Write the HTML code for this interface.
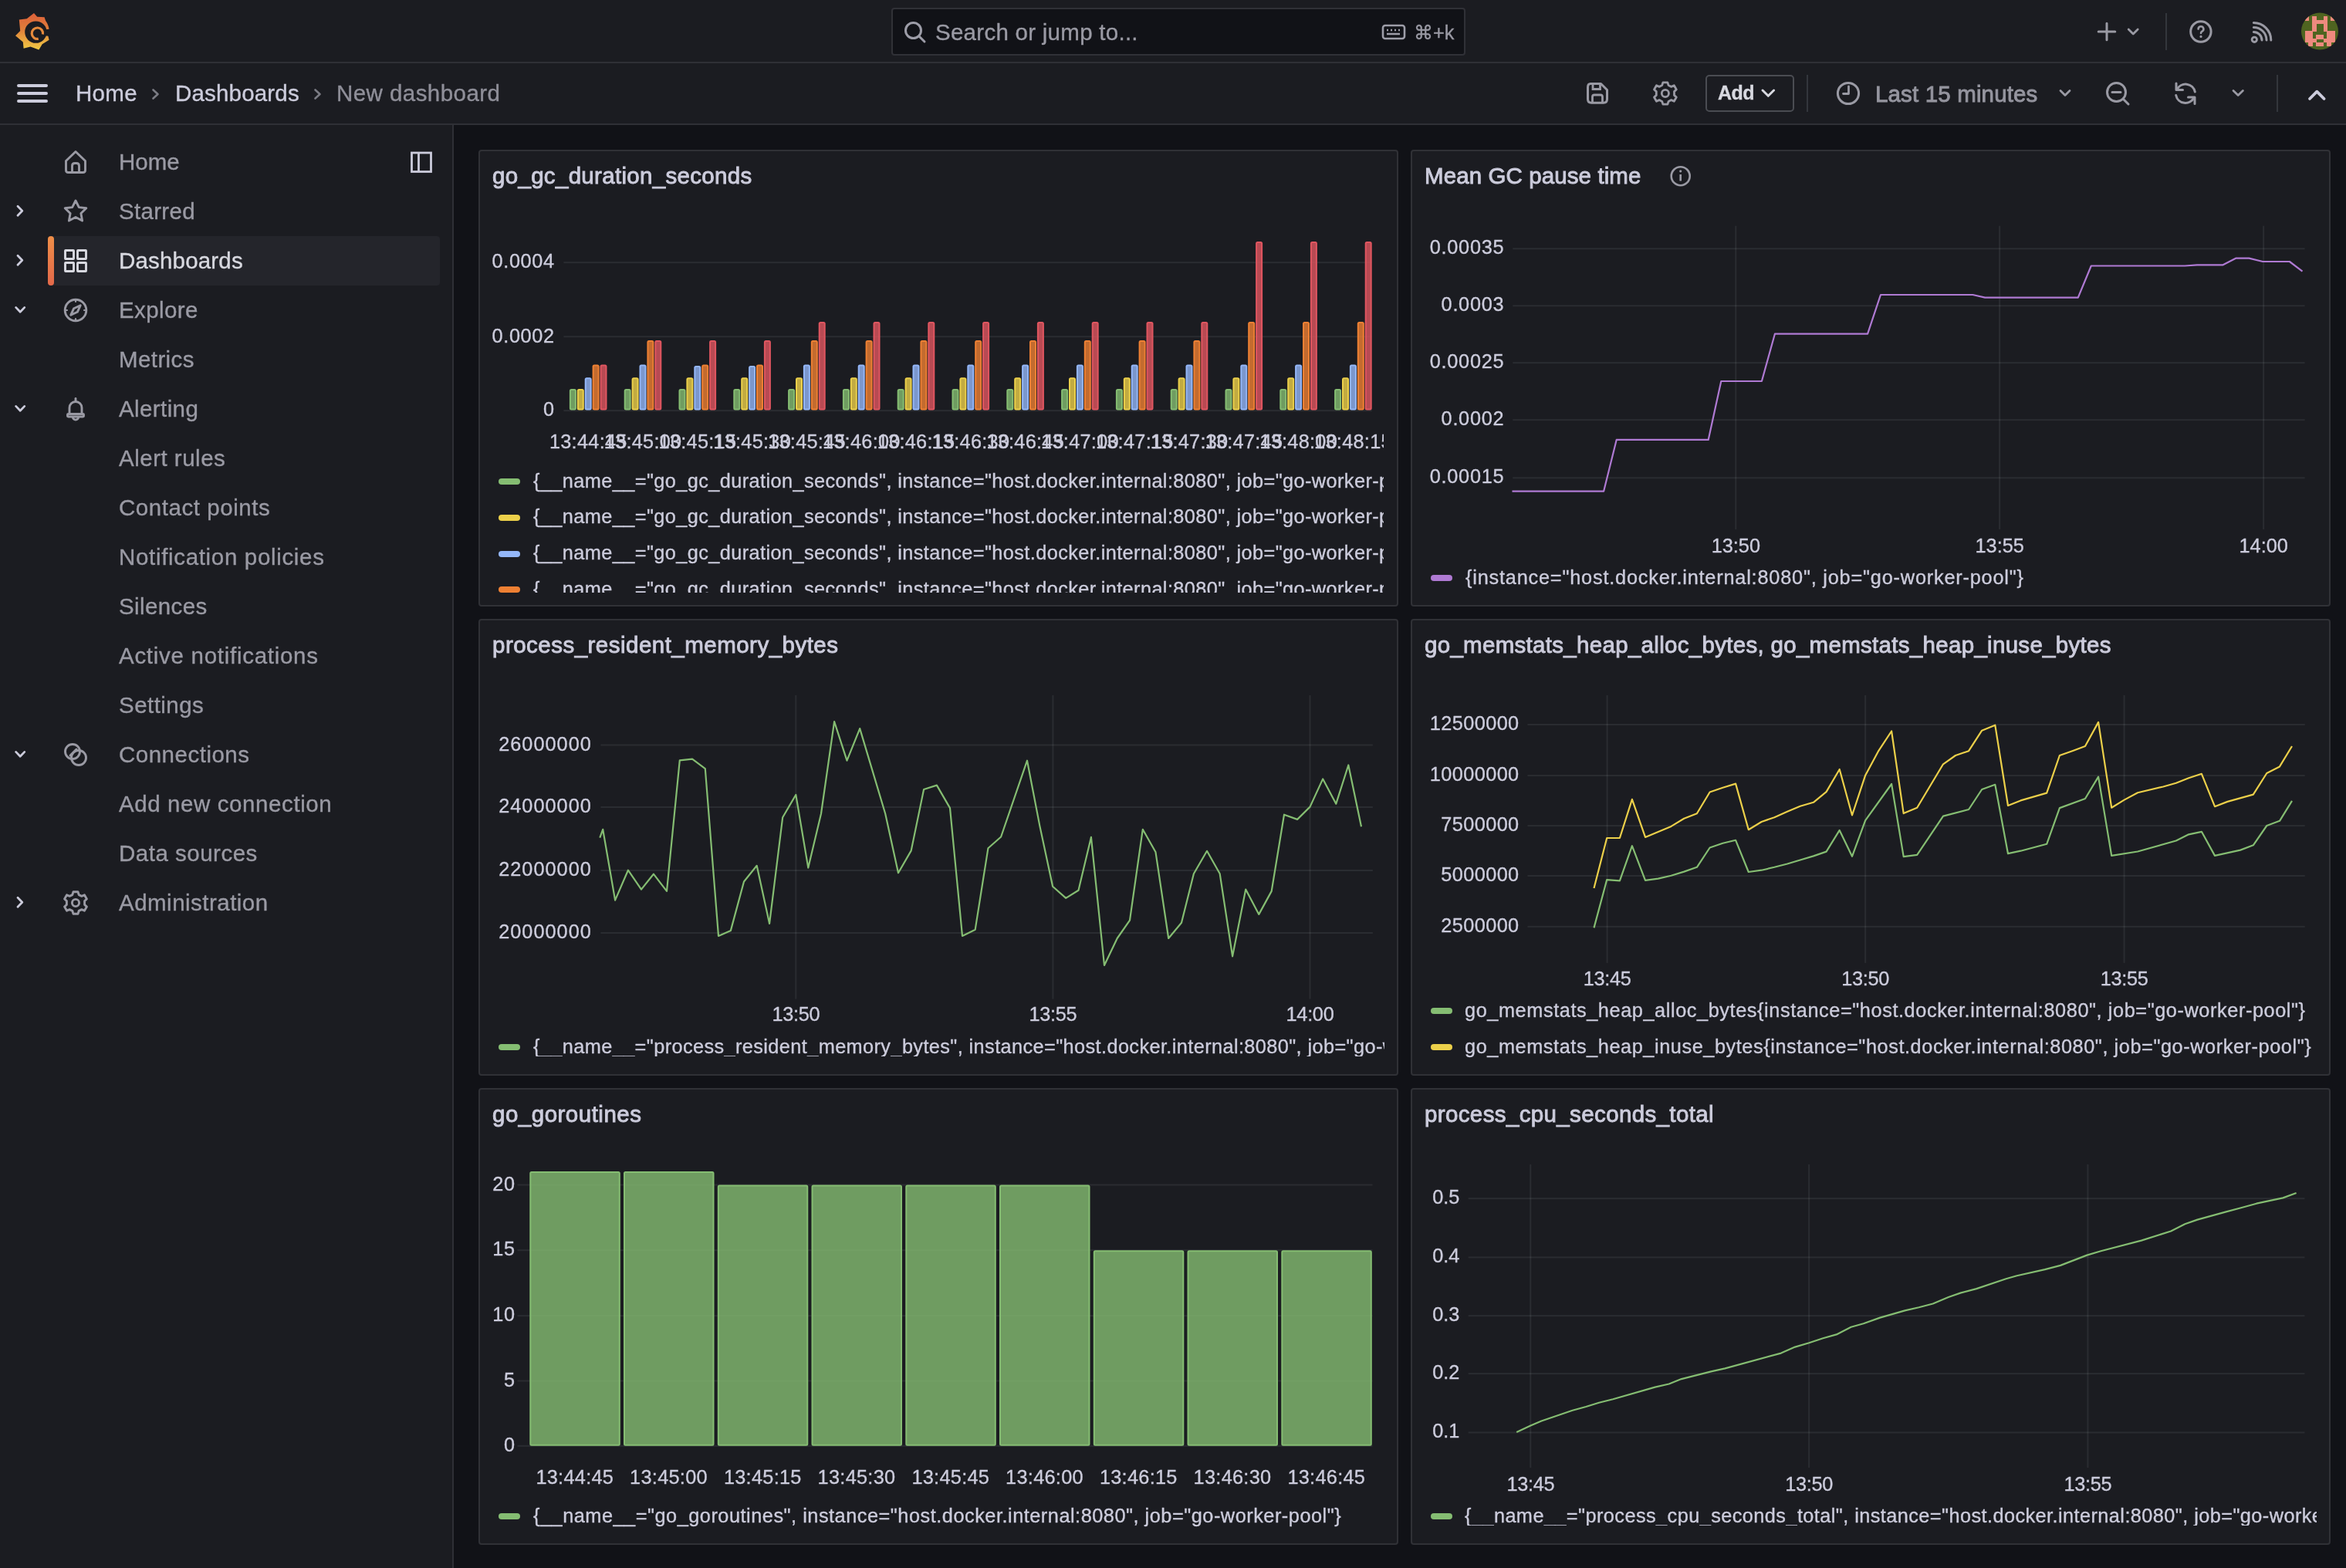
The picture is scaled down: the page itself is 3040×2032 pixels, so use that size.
<!DOCTYPE html>
<html><head><meta charset="utf-8"><title>New dashboard - Dashboards - Grafana</title>
<style>
html,body{margin:0;padding:0;width:3040px;height:2032px;overflow:hidden;background:#111217;font-family:"Liberation Sans", sans-serif;}
.r{position:absolute;}
.t{position:absolute;white-space:pre;will-change:transform;-webkit-text-stroke:0.35px currentColor;}
svg{will-change:transform;}
@media (max-width:1600px){html{zoom:0.5;}}
</style></head><body>
<div class="r" style="left:0px;top:0px;width:3040px;height:80px;background:#1b1c21"></div>
<div class="r" style="left:0px;top:80px;width:3040px;height:2px;background:#2f3036"></div>
<div class="r" style="left:0px;top:82px;width:3040px;height:78px;background:#1b1c21"></div>
<div class="r" style="left:0px;top:160px;width:3040px;height:2px;background:#2f3036"></div>
<div class="r" style="left:0px;top:162px;width:586px;height:1870px;background:#1b1c21"></div>
<div class="r" style="left:586px;top:162px;width:2px;height:1870px;background:#2f3036"></div>
<svg class="r" style="left:14px;top:12px" width="56" height="58" viewBox="14 12 56 58">
<defs><linearGradient id="lg" x1="0" y1="0" x2="0" y2="1"><stop offset="0" stop-color="#dc5f3a"/><stop offset="0.45" stop-color="#e07f3a"/><stop offset="1" stop-color="#f0cb45"/></linearGradient></defs>
<path fill="url(#lg)" d="M44 17 L48.2 21.8 L57.6 22.2 Q58.6 25.5 59.2 27 Q63.2 32.5 63.9 39.7 L62 45 L63.6 51.8 L54.7 57.2 L50.4 64.6 L39.5 60.4 L30.6 62.8 L29.8 54.5 L20 46.2 L26.2 40 L24.8 25.6 L34.7 24.2 Z"/>
<circle cx="46.4" cy="41.6" r="11" fill="none" stroke="#1b1c21" stroke-width="6.4"/>
<circle cx="46.4" cy="41.6" r="8.2" fill="#1b1c21"/>
<path d="M56 38.5 L66 37.5 L66 47 L55 46 Z" fill="#1b1c21"/>
<path d="M49.77 50.27 A7.2 7.2 0 1 1 55.47 44.57" fill="none" stroke="#e58a3c" stroke-width="3.2"/>
</svg>
<div class="r" style="left:1155px;top:10px;width:744px;height:62px;background:#111217;border:2px solid #303137;border-radius:4px;box-sizing:border-box"></div>
<svg class="r" style="left:1170px;top:27px" width="32" height="30" viewBox="0 0 32 30">
<circle cx="13.5" cy="12.5" r="10" fill="none" stroke="#9d9da8" stroke-width="3"/>
<path d="M21 20 L28 27" stroke="#9d9da8" stroke-width="3" stroke-linecap="round"/></svg>
<div class="t" style="left:1212.4px;top:26.7px;font-size:29.5px;line-height:29.5px;color:#9a9aa4;letter-spacing:0.27px;">Search or jump to...</div>
<svg class="r" style="left:1790px;top:31px" width="32" height="22" viewBox="0 0 32 22">
<rect x="2" y="2" width="28" height="17" rx="3" fill="none" stroke="#9d9da8" stroke-width="2.6"/>
<path d="M7 8h2M12 8h2M17 8h2M22 8h2M7 13h17" stroke="#9d9da8" stroke-width="2.4"/></svg>
<div class="t" style="left:1831.5px;top:30.0px;font-size:25.3px;line-height:25.3px;color:#9a9aa4;">⌘+k</div>
<svg class="r" style="left:2710px;top:14px" width="330" height="56" viewBox="2710 14 330 56">
<path d="M2730 30.2 V51.8 M2719.2 41 H2740.8" stroke="#9a9aa4" stroke-width="3" stroke-linecap="round"/>
<path d="M2758.2 38 L2764.2 44 L2770.2 38" fill="none" stroke="#9a9aa4" stroke-width="2.8" stroke-linecap="round" stroke-linejoin="round"/>
<rect x="2806" y="17" width="2" height="48" fill="#33363c"/>
<circle cx="2851.9" cy="41" r="13.2" fill="none" stroke="#9a9aa4" stroke-width="3"/>
<path d="M2848.6 37.6 a3.4 3.4 0 1 1 4.8 3.1 q-1.4 0.7 -1.4 2.3" fill="none" stroke="#9a9aa4" stroke-width="2.6" stroke-linecap="round"/>
<circle cx="2852" cy="47.4" r="1.6" fill="#9a9aa4"/>
<circle cx="2921.3" cy="51.3" r="3.2" fill="none" stroke="#9a9aa4" stroke-width="2.8"/>
<path d="M2920.3 41.5 A10.6 10.6 0 0 1 2931 52 M2920.3 35.5 A16.6 16.6 0 0 1 2937 52 M2920.3 29.6 A22.4 22.4 0 0 1 2942.8 52" fill="none" stroke="#9a9aa4" stroke-width="3" stroke-linecap="round"/>
</svg>
<svg class="r" style="left:2980px;top:14px" width="54" height="54" viewBox="2980 14 54 54">
<defs><clipPath id="av"><circle cx="3006" cy="40.6" r="24"/></clipPath></defs>
<g clip-path="url(#av)" shape-rendering="crispEdges"><rect x="2980" y="14" width="54" height="54" fill="#4F6420"/><rect x="2986.50" y="21.10" width="5.40" height="5.40" fill="#EE8A7E"/><rect x="2996.10" y="21.10" width="5.40" height="5.40" fill="#EE8A7E"/><rect x="3010.50" y="21.10" width="5.40" height="5.40" fill="#EE8A7E"/><rect x="3020.10" y="21.10" width="5.40" height="5.40" fill="#EE8A7E"/><rect x="2996.10" y="25.90" width="5.40" height="5.40" fill="#EE8A7E"/><rect x="3000.90" y="25.90" width="5.40" height="5.40" fill="#EE8A7E"/><rect x="3005.70" y="25.90" width="5.40" height="5.40" fill="#EE8A7E"/><rect x="3010.50" y="25.90" width="5.40" height="5.40" fill="#EE8A7E"/><rect x="2996.10" y="30.70" width="5.40" height="5.40" fill="#EE8A7E"/><rect x="3010.50" y="30.70" width="5.40" height="5.40" fill="#EE8A7E"/><rect x="2996.10" y="35.50" width="5.40" height="5.40" fill="#EE8A7E"/><rect x="3010.50" y="35.50" width="5.40" height="5.40" fill="#EE8A7E"/><rect x="2986.50" y="40.30" width="5.40" height="5.40" fill="#EE8A7E"/><rect x="2991.30" y="40.30" width="5.40" height="5.40" fill="#EE8A7E"/><rect x="3015.30" y="40.30" width="5.40" height="5.40" fill="#EE8A7E"/><rect x="3020.10" y="40.30" width="5.40" height="5.40" fill="#EE8A7E"/><rect x="2986.50" y="45.10" width="5.40" height="5.40" fill="#EE8A7E"/><rect x="2991.30" y="45.10" width="5.40" height="5.40" fill="#EE8A7E"/><rect x="3000.90" y="45.10" width="5.40" height="5.40" fill="#EE8A7E"/><rect x="3005.70" y="45.10" width="5.40" height="5.40" fill="#EE8A7E"/><rect x="3015.30" y="45.10" width="5.40" height="5.40" fill="#EE8A7E"/><rect x="3020.10" y="45.10" width="5.40" height="5.40" fill="#EE8A7E"/><rect x="2986.50" y="49.90" width="5.40" height="5.40" fill="#EE8A7E"/><rect x="2991.30" y="49.90" width="5.40" height="5.40" fill="#EE8A7E"/><rect x="2996.10" y="49.90" width="5.40" height="5.40" fill="#EE8A7E"/><rect x="3010.50" y="49.90" width="5.40" height="5.40" fill="#EE8A7E"/><rect x="3015.30" y="49.90" width="5.40" height="5.40" fill="#EE8A7E"/><rect x="3020.10" y="49.90" width="5.40" height="5.40" fill="#EE8A7E"/><rect x="2991.30" y="54.70" width="5.40" height="5.40" fill="#EE8A7E"/><rect x="3000.90" y="54.70" width="5.40" height="5.40" fill="#EE8A7E"/><rect x="3005.70" y="54.70" width="5.40" height="5.40" fill="#EE8A7E"/><rect x="3015.30" y="54.70" width="5.40" height="5.40" fill="#EE8A7E"/></g></svg>
<svg class="r" style="left:20px;top:106px" width="46" height="30" viewBox="20 106 46 30">
<path d="M24 111 H60 M24 121 H60 M24 131 H60" stroke="#ccccdc" stroke-width="4" stroke-linecap="round"/></svg>
<div class="t" style="left:98.0px;top:105.6px;font-size:29.5px;line-height:29.5px;color:#ccccdc;letter-spacing:0.30px;">Home</div>
<svg class="r" style="left:190px;top:108px" width="240" height="28" viewBox="190 108 240 28">
<path d="M198.5 116.5 L204.5 122 L198.5 127.5" fill="none" stroke="#7b7c84" stroke-width="2.6" stroke-linecap="round" stroke-linejoin="round"/>
<path d="M408.5 116.5 L414.5 122 L408.5 127.5" fill="none" stroke="#7b7c84" stroke-width="2.6" stroke-linecap="round" stroke-linejoin="round"/></svg>
<div class="t" style="left:227.0px;top:105.6px;font-size:29.5px;line-height:29.5px;color:#ccccdc;letter-spacing:0.18px;">Dashboards</div>
<div class="t" style="left:435.6px;top:105.6px;font-size:29.5px;line-height:29.5px;color:#8f8f99;letter-spacing:0.44px;">New dashboard</div>
<svg class="r" style="left:2040px;top:90px" width="1000" height="60" viewBox="2040 90 1000 60">
<path d="M2061 108.5 H2074.5 L2082.5 116.5 V128.5 Q2082.5 133.2 2077.8 133.2 H2062.2 Q2057.5 133.2 2057.5 128.5 V113.2 Q2057.5 108.5 2061 108.5 Z" fill="none" stroke="#9a9aa4" stroke-width="3" stroke-linejoin="round"/>
<path d="M2064 109 V115.5 H2073.5 V109" fill="none" stroke="#9a9aa4" stroke-width="2.8"/>
<path d="M2063.5 133 V125.5 Q2063.5 123 2066 123 H2074 Q2076.5 123 2076.5 125.5 V133" fill="none" stroke="#9a9aa4" stroke-width="2.8"/>
<g transform="translate(2157.9 121)">
<path d="M-3 -14.2 H3 L4.2 -10.4 L7.8 -8.6 L11.4 -10.2 L14.4 -5 L11.6 -2.4 V2.4 L14.4 5 L11.4 10.2 L7.8 8.6 L4.2 10.4 L3 14.2 H-3 L-4.2 10.4 L-7.8 8.6 L-11.4 10.2 L-14.4 5 L-11.6 2.4 V-2.4 L-14.4 -5 L-11.4 -10.2 L-7.8 -8.6 L-4.2 -10.4 Z" fill="none" stroke="#9a9aa4" stroke-width="2.8" stroke-linejoin="round"/>
<circle cx="0" cy="0" r="4.6" fill="none" stroke="#9a9aa4" stroke-width="2.8"/></g>
<rect x="2211" y="98" width="113" height="46" rx="4" fill="none" stroke="#4a4c52" stroke-width="2"/>
<path d="M2284 117 L2291.3 124.3 L2298.6 117" fill="none" stroke="#d8d9e0" stroke-width="3" stroke-linecap="round" stroke-linejoin="round"/>
<rect x="2341" y="97" width="2" height="48" fill="#33363c"/>
<circle cx="2395" cy="121" r="13.6" fill="none" stroke="#9a9aa4" stroke-width="3"/>
<path d="M2395.5 112 V121.5 H2388.5" fill="none" stroke="#9a9aa4" stroke-width="2.8" stroke-linecap="round" stroke-linejoin="round"/>
<path d="M2670 117.5 L2676 123.5 L2682 117.5" fill="none" stroke="#9a9aa4" stroke-width="2.8" stroke-linecap="round" stroke-linejoin="round"/>
<circle cx="2742.5" cy="119.5" r="12" fill="none" stroke="#9a9aa4" stroke-width="3"/>
<path d="M2737 119.5 H2748 M2751.5 128.5 L2758 135" stroke="#9a9aa4" stroke-width="3" stroke-linecap="round"/>
<path d="M2821 116 A12.4 12.4 0 0 1 2844.3 119 M2843 126.5 A12.4 12.4 0 0 1 2819.7 123.5" fill="none" stroke="#9a9aa4" stroke-width="3" stroke-linecap="round"/>
<path d="M2820 108 V116.5 H2828.5 M2844 134.5 V126 H2835.5" fill="none" stroke="#9a9aa4" stroke-width="3" stroke-linecap="round" stroke-linejoin="round"/>
<path d="M2894 117.5 L2900.2 123.5 L2906.4 117.5" fill="none" stroke="#9a9aa4" stroke-width="2.8" stroke-linecap="round" stroke-linejoin="round"/>
<rect x="2950" y="97" width="2" height="48" fill="#33363c"/>
<path d="M2993 128 L3002.3 118.7 L3011.6 128" fill="none" stroke="#ccccdc" stroke-width="3.8" stroke-linecap="round" stroke-linejoin="round"/>
</svg>
<div class="t" style="left:2225.8px;top:107.9px;font-size:25px;line-height:25px;color:#d8d9e0;letter-spacing:-0.60px;font-weight:700;">Add</div>
<div class="t" style="left:2430.0px;top:106.6px;font-size:29.5px;line-height:29.5px;color:#95959f;letter-spacing:0.15px;-webkit-text-stroke:0.9px #95959f;">Last 15 minutes</div>
<div class="r" style="left:62px;top:306px;width:508px;height:64px;background:#24252b;border-radius:4px"></div>
<div class="r" style="left:62px;top:306px;width:8px;height:64px;background:linear-gradient(180deg,#ef8e48,#e3694a);border-radius:4px"></div>
<div class="t" style="left:154.3px;top:195.2px;font-size:29.5px;line-height:29.5px;color:#9a9aa4;">Home</div>
<div class="t" style="left:154.3px;top:259.2px;font-size:29.5px;line-height:29.5px;color:#9a9aa4;letter-spacing:0.30px;">Starred</div>
<div class="t" style="left:154.3px;top:323.2px;font-size:29.5px;line-height:29.5px;color:#d8d9e0;letter-spacing:0.18px;">Dashboards</div>
<div class="t" style="left:154.3px;top:387.2px;font-size:29.5px;line-height:29.5px;color:#9a9aa4;letter-spacing:0.40px;">Explore</div>
<div class="t" style="left:154.3px;top:451.2px;font-size:29.5px;line-height:29.5px;color:#9a9aa4;letter-spacing:0.40px;">Metrics</div>
<div class="t" style="left:154.3px;top:515.2px;font-size:29.5px;line-height:29.5px;color:#9a9aa4;letter-spacing:0.40px;">Alerting</div>
<div class="t" style="left:154.3px;top:579.2px;font-size:29.5px;line-height:29.5px;color:#9a9aa4;letter-spacing:0.50px;">Alert rules</div>
<div class="t" style="left:154.3px;top:643.2px;font-size:29.5px;line-height:29.5px;color:#9a9aa4;letter-spacing:0.55px;">Contact points</div>
<div class="t" style="left:154.3px;top:707.2px;font-size:29.5px;line-height:29.5px;color:#9a9aa4;letter-spacing:0.67px;">Notification policies</div>
<div class="t" style="left:154.3px;top:771.2px;font-size:29.5px;line-height:29.5px;color:#9a9aa4;letter-spacing:0.40px;">Silences</div>
<div class="t" style="left:154.3px;top:835.2px;font-size:29.5px;line-height:29.5px;color:#9a9aa4;letter-spacing:0.72px;">Active notifications</div>
<div class="t" style="left:154.3px;top:899.2px;font-size:29.5px;line-height:29.5px;color:#9a9aa4;letter-spacing:0.45px;">Settings</div>
<div class="t" style="left:154.3px;top:963.2px;font-size:29.5px;line-height:29.5px;color:#9a9aa4;letter-spacing:0.50px;">Connections</div>
<div class="t" style="left:154.3px;top:1027.2px;font-size:29.5px;line-height:29.5px;color:#9a9aa4;letter-spacing:0.59px;">Add new connection</div>
<div class="t" style="left:154.3px;top:1091.2px;font-size:29.5px;line-height:29.5px;color:#9a9aa4;letter-spacing:0.50px;">Data sources</div>
<div class="t" style="left:154.3px;top:1155.2px;font-size:29.5px;line-height:29.5px;color:#9a9aa4;letter-spacing:0.48px;">Administration</div>
<svg class="r" style="left:0;top:162px" width="586" height="1100" viewBox="0 162 586 1100"><g transform="translate(98 210)" fill="none" stroke="#9a9aa4" stroke-width="2.9" stroke-linejoin="round" stroke-linecap="round"><path d="M-12.5 -1.5 L0 -13.5 L12.5 -1.5 V10.5 Q12.5 13.5 9.5 13.5 H-9.5 Q-12.5 13.5 -12.5 10.5 Z"/><path d="M-4.5 13.5 V5 Q-4.5 1.5 -1 1.5 H1 Q4.5 1.5 4.5 5 V13.5"/></g><path d="M23 267.2 L28.8 273.2 L23 279.2" fill="none" stroke="#ccccdc" stroke-width="2.8" stroke-linecap="round" stroke-linejoin="round"/><g transform="translate(98 274)" fill="none" stroke="#9a9aa4" stroke-width="2.9" stroke-linejoin="round" stroke-linecap="round"><path d="M0 -14 L4.3 -5.4 L13.8 -4.2 L6.9 2.5 L8.6 12 L0 7.5 L-8.6 12 L-6.9 2.5 L-13.8 -4.2 L-4.3 -5.4 Z"/></g><path d="M23 331.2 L28.8 337.2 L23 343.2" fill="none" stroke="#ccccdc" stroke-width="2.8" stroke-linecap="round" stroke-linejoin="round"/><g transform="translate(98 338)" fill="none" stroke="#d8d9e0" stroke-width="2.9" stroke-linejoin="round" stroke-linecap="round"><rect x="-13.5" y="-13.5" width="11" height="11" rx="0.5"/><rect x="2.5" y="-13.5" width="11" height="11" rx="0.5"/><rect x="-13.5" y="2.5" width="11" height="11" rx="0.5"/><rect x="2.5" y="2.5" width="11" height="11" rx="0.5"/></g><path d="M20.6 398.4 L26.2 404.2 L31.8 398.4" fill="none" stroke="#ccccdc" stroke-width="2.8" stroke-linecap="round" stroke-linejoin="round"/><g transform="translate(98 402)" fill="none" stroke="#9a9aa4" stroke-width="2.9" stroke-linejoin="round" stroke-linecap="round"><circle cx="0" cy="0" r="13.8"/><path d="M6.2 -6.2 L2.3 2.3 L-6.2 6.2 L-2.3 -2.3 Z"/><path d="M0 -13.8 V-11 M0 13.8 V11 M-13.8 0 H-11 M13.8 0 H11" stroke-width="2.2"/></g><path d="M20.6 526.4 L26.2 532.2 L31.8 526.4" fill="none" stroke="#ccccdc" stroke-width="2.8" stroke-linecap="round" stroke-linejoin="round"/><g transform="translate(98 530)" fill="none" stroke="#9a9aa4" stroke-width="2.9" stroke-linejoin="round" stroke-linecap="round"><path d="M-8 6.5 V-1.5 A8 8 0 0 1 8 -1.5 V6.5"/><path d="M-10.5 7.2 Q-10.5 6.5 -9.5 6.5 H9.5 Q10.5 6.5 10.5 7.2 V9.3 Q10.5 10 9.5 10 H-9.5 Q-10.5 10 -10.5 9.3 Z"/><path d="M0 -13.5 V-10"/><path d="M-3.6 10.5 A3.6 3.6 0 0 0 3.6 10.5"/></g><path d="M20.6 974.4 L26.2 980.2 L31.8 974.4" fill="none" stroke="#ccccdc" stroke-width="2.8" stroke-linecap="round" stroke-linejoin="round"/><g transform="translate(98 978)" fill="none" stroke="#9a9aa4" stroke-width="2.9" stroke-linejoin="round" stroke-linecap="round"><circle cx="-4" cy="-4" r="9.5"/><circle cx="4" cy="4" r="9.5"/><path d="M-7 1 L1 -7"/></g><path d="M23 1163.2 L28.8 1169.2 L23 1175.2" fill="none" stroke="#ccccdc" stroke-width="2.8" stroke-linecap="round" stroke-linejoin="round"/><g transform="translate(98 1170)" fill="none" stroke="#9a9aa4" stroke-width="2.9" stroke-linejoin="round" stroke-linecap="round"><path d="M-3 -14.2 H3 L4.2 -10.4 L7.8 -8.6 L11.4 -10.2 L14.4 -5 L11.6 -2.4 V2.4 L14.4 5 L11.4 10.2 L7.8 8.6 L4.2 10.4 L3 14.2 H-3 L-4.2 10.4 L-7.8 8.6 L-11.4 10.2 L-14.4 5 L-11.6 2.4 V-2.4 L-14.4 -5 L-11.4 -10.2 L-7.8 -8.6 L-4.2 -10.4 Z"/><circle cx="0" cy="0" r="4.6"/></g><rect x="533.5" y="198" width="25" height="24.5" fill="none" stroke="#ccccdc" stroke-width="2.8"/><path d="M542.5 198 V222.5" stroke="#ccccdc" stroke-width="2.8"/></svg>
<div class="r" style="left:620px;top:194px;width:1192px;height:592px;background:#1b1c21;border:2px solid #303136;border-radius:4px;box-sizing:border-box"></div>
<div class="r" style="left:1828px;top:194px;width:1192px;height:592px;background:#1b1c21;border:2px solid #303136;border-radius:4px;box-sizing:border-box"></div>
<div class="r" style="left:620px;top:802px;width:1192px;height:592px;background:#1b1c21;border:2px solid #303136;border-radius:4px;box-sizing:border-box"></div>
<div class="r" style="left:1828px;top:802px;width:1192px;height:592px;background:#1b1c21;border:2px solid #303136;border-radius:4px;box-sizing:border-box"></div>
<div class="r" style="left:620px;top:1410px;width:1192px;height:592px;background:#1b1c21;border:2px solid #303136;border-radius:4px;box-sizing:border-box"></div>
<div class="r" style="left:1828px;top:1410px;width:1192px;height:592px;background:#1b1c21;border:2px solid #303136;border-radius:4px;box-sizing:border-box"></div>
<div class="t" style="left:638.3px;top:212.5px;font-size:29.5px;line-height:29.5px;color:#ccccdc;letter-spacing:0.31px;-webkit-text-stroke:0.9px #ccccdc;">go_gc_duration_seconds</div>
<div class="r" style="left:640px;top:600px;width:1153px;height:168px;overflow:hidden">
<div class="r" style="left:6px;top:20.0px;width:28px;height:8px;background:#85bd72;border-radius:4px"></div>
<div class="t" style="left:50.6px;top:10.5px;font-size:25.3px;line-height:25.3px;color:#ccccdc;letter-spacing:0.41px">{__name__="go_gc_duration_seconds", instance="host.docker.internal:8080", job="go-worker-pool"}</div>
<div class="r" style="left:6px;top:66.8px;width:28px;height:8px;background:#ecd04a;border-radius:4px"></div>
<div class="t" style="left:50.6px;top:57.3px;font-size:25.3px;line-height:25.3px;color:#ccccdc;letter-spacing:0.41px">{__name__="go_gc_duration_seconds", instance="host.docker.internal:8080", job="go-worker-pool"}</div>
<div class="r" style="left:6px;top:113.6px;width:28px;height:8px;background:#94b7f9;border-radius:4px"></div>
<div class="t" style="left:50.6px;top:104.1px;font-size:25.3px;line-height:25.3px;color:#ccccdc;letter-spacing:0.41px">{__name__="go_gc_duration_seconds", instance="host.docker.internal:8080", job="go-worker-pool"}</div>
<div class="r" style="left:6px;top:160.4px;width:28px;height:8px;background:#ee8033;border-radius:4px"></div>
<div class="t" style="left:50.6px;top:150.9px;font-size:25.3px;line-height:25.3px;color:#ccccdc;letter-spacing:0.41px">{__name__="go_gc_duration_seconds", instance="host.docker.internal:8080", job="go-worker-pool"}</div>
</div>
<div class="t" style="left:1846.4px;top:212.5px;font-size:29.5px;line-height:29.5px;color:#ccccdc;letter-spacing:0.10px;-webkit-text-stroke:0.9px #ccccdc;">Mean GC pause time</div>
<div class="r" style="left:1854px;top:745px;width:28px;height:8px;background:#af7ad3;border-radius:4px"></div>
<div class="t" style="left:1898.9px;top:735.8px;font-size:25.3px;line-height:25.3px;color:#ccccdc;letter-spacing:0.80px;">{instance="host.docker.internal:8080", job="go-worker-pool"}</div>
<div class="t" style="left:638.0px;top:820.9px;font-size:29.5px;line-height:29.5px;color:#ccccdc;letter-spacing:0.48px;-webkit-text-stroke:0.9px #ccccdc;">process_resident_memory_bytes</div>
<div class="r" style="left:646px;top:1353px;width:28px;height:8px;background:#85bd72;border-radius:4px"></div>
<div class="t" style="left:690.5px;top:1343.5px;font-size:25.3px;line-height:25.3px;color:#ccccdc;letter-spacing:0.40px;width:1102.8px;overflow:hidden;">{__name__="process_resident_memory_bytes", instance="host.docker.internal:8080", job="go-worker-pool"}</div>
<div class="t" style="left:1846.0px;top:820.9px;font-size:29.5px;line-height:29.5px;color:#ccccdc;letter-spacing:0.30px;-webkit-text-stroke:0.9px #ccccdc;">go_memstats_heap_alloc_bytes, go_memstats_heap_inuse_bytes</div>
<div class="r" style="left:1854px;top:1306px;width:28px;height:8px;background:#85bd72;border-radius:4px"></div>
<div class="t" style="left:1898.3px;top:1296.5px;font-size:25.3px;line-height:25.3px;color:#ccccdc;letter-spacing:0.58px;">go_memstats_heap_alloc_bytes{instance="host.docker.internal:8080", job="go-worker-pool"}</div>
<div class="r" style="left:1854px;top:1353px;width:28px;height:8px;background:#ecd04a;border-radius:4px"></div>
<div class="t" style="left:1898.3px;top:1343.5px;font-size:25.3px;line-height:25.3px;color:#ccccdc;letter-spacing:0.57px;">go_memstats_heap_inuse_bytes{instance="host.docker.internal:8080", job="go-worker-pool"}</div>
<div class="t" style="left:638.0px;top:1428.9px;font-size:29.5px;line-height:29.5px;color:#ccccdc;letter-spacing:0.50px;-webkit-text-stroke:0.9px #ccccdc;">go_goroutines</div>
<div class="r" style="left:646px;top:1961px;width:28px;height:8px;background:#85bd72;border-radius:4px"></div>
<div class="t" style="left:690.5px;top:1951.5px;font-size:25.3px;line-height:25.3px;color:#ccccdc;letter-spacing:0.52px;">{__name__="go_goroutines", instance="host.docker.internal:8080", job="go-worker-pool"}</div>
<div class="t" style="left:1846.0px;top:1428.9px;font-size:29.5px;line-height:29.5px;color:#ccccdc;letter-spacing:0.37px;-webkit-text-stroke:0.9px #ccccdc;">process_cpu_seconds_total</div>
<div class="r" style="left:1854px;top:1961px;width:28px;height:8px;background:#85bd72;border-radius:4px"></div>
<div class="t" style="left:1898.3px;top:1951.5px;font-size:25.3px;line-height:25.3px;color:#ccccdc;letter-spacing:0.43px;width:1103.7px;overflow:hidden;">{__name__="process_cpu_seconds_total", instance="host.docker.internal:8080", job="go-worker-pool"}</div>
<svg class="r" style="left:0;top:0" width="3040" height="2032" viewBox="0 0 3040 2032" font-family="Liberation Sans, sans-serif"><defs><clipPath id="p1clip"><rect x="620" y="540" width="1173" height="60"/></clipPath></defs><rect x="730.4" y="339.2" width="1047.3" height="2" fill="rgba(240,250,255,0.075)"/><rect x="730.4" y="435.3" width="1047.3" height="2" fill="rgba(240,250,255,0.075)"/><rect x="730.4" y="531.2" width="1047.3" height="2" fill="rgba(240,250,255,0.075)"/><text x="718.6" y="347.4" text-anchor="end" letter-spacing="0.6" font-size="25.3" fill="#ccccdc" stroke="#ccccdc" stroke-width="0.35">0.0004</text><text x="718.6" y="443.5" text-anchor="end" letter-spacing="0.6" font-size="25.3" fill="#ccccdc" stroke="#ccccdc" stroke-width="0.35">0.0002</text><text x="718.6" y="539.4" text-anchor="end" letter-spacing="0.6" font-size="25.3" fill="#ccccdc" stroke="#ccccdc" stroke-width="0.35">0</text><rect x="738.9" y="505.0" width="7" height="25.6" rx="1.5" fill="#85bd72" fill-opacity="0.8" stroke="#85bd72" stroke-width="2"/><rect x="748.8" y="505.0" width="7" height="25.6" rx="1.5" fill="#ecd04a" fill-opacity="0.8" stroke="#ecd04a" stroke-width="2"/><rect x="758.7" y="490.3" width="7" height="40.3" rx="1.5" fill="#94b7f9" fill-opacity="0.8" stroke="#94b7f9" stroke-width="2"/><rect x="768.6" y="473.4" width="7" height="57.2" rx="1.5" fill="#ee8033" fill-opacity="0.8" stroke="#ee8033" stroke-width="2"/><rect x="778.5" y="473.4" width="7" height="57.2" rx="1.5" fill="#e05660" fill-opacity="0.8" stroke="#e05660" stroke-width="2"/><g clip-path="url(#p1clip)"><text x="762.3" y="581.0" text-anchor="middle" letter-spacing="0.29" font-size="25.3" fill="#ccccdc" stroke="#ccccdc" stroke-width="0.35">13:44:45</text></g><rect x="809.7" y="505.0" width="7" height="25.6" rx="1.5" fill="#85bd72" fill-opacity="0.8" stroke="#85bd72" stroke-width="2"/><rect x="819.6" y="490.3" width="7" height="40.3" rx="1.5" fill="#ecd04a" fill-opacity="0.8" stroke="#ecd04a" stroke-width="2"/><rect x="829.5" y="473.4" width="7" height="57.2" rx="1.5" fill="#94b7f9" fill-opacity="0.8" stroke="#94b7f9" stroke-width="2"/><rect x="839.4" y="442.1" width="7" height="88.5" rx="1.5" fill="#ee8033" fill-opacity="0.8" stroke="#ee8033" stroke-width="2"/><rect x="849.3" y="442.1" width="7" height="88.5" rx="1.5" fill="#e05660" fill-opacity="0.8" stroke="#e05660" stroke-width="2"/><g clip-path="url(#p1clip)"><text x="833.1" y="581.0" text-anchor="middle" letter-spacing="0.29" font-size="25.3" fill="#ccccdc" stroke="#ccccdc" stroke-width="0.35">13:45:00</text></g><rect x="880.5" y="505.0" width="7" height="25.6" rx="1.5" fill="#85bd72" fill-opacity="0.8" stroke="#85bd72" stroke-width="2"/><rect x="890.4" y="490.3" width="7" height="40.3" rx="1.5" fill="#ecd04a" fill-opacity="0.8" stroke="#ecd04a" stroke-width="2"/><rect x="900.3" y="475.1" width="7" height="55.5" rx="1.5" fill="#94b7f9" fill-opacity="0.8" stroke="#94b7f9" stroke-width="2"/><rect x="910.2" y="473.4" width="7" height="57.2" rx="1.5" fill="#ee8033" fill-opacity="0.8" stroke="#ee8033" stroke-width="2"/><rect x="920.1" y="442.1" width="7" height="88.5" rx="1.5" fill="#e05660" fill-opacity="0.8" stroke="#e05660" stroke-width="2"/><g clip-path="url(#p1clip)"><text x="903.9" y="581.0" text-anchor="middle" letter-spacing="0.29" font-size="25.3" fill="#ccccdc" stroke="#ccccdc" stroke-width="0.35">13:45:15</text></g><rect x="951.3" y="505.0" width="7" height="25.6" rx="1.5" fill="#85bd72" fill-opacity="0.8" stroke="#85bd72" stroke-width="2"/><rect x="961.2" y="490.3" width="7" height="40.3" rx="1.5" fill="#ecd04a" fill-opacity="0.8" stroke="#ecd04a" stroke-width="2"/><rect x="971.1" y="475.1" width="7" height="55.5" rx="1.5" fill="#94b7f9" fill-opacity="0.8" stroke="#94b7f9" stroke-width="2"/><rect x="981.0" y="473.4" width="7" height="57.2" rx="1.5" fill="#ee8033" fill-opacity="0.8" stroke="#ee8033" stroke-width="2"/><rect x="990.9" y="442.1" width="7" height="88.5" rx="1.5" fill="#e05660" fill-opacity="0.8" stroke="#e05660" stroke-width="2"/><g clip-path="url(#p1clip)"><text x="974.7" y="581.0" text-anchor="middle" letter-spacing="0.29" font-size="25.3" fill="#ccccdc" stroke="#ccccdc" stroke-width="0.35">13:45:30</text></g><rect x="1022.1" y="505.0" width="7" height="25.6" rx="1.5" fill="#85bd72" fill-opacity="0.8" stroke="#85bd72" stroke-width="2"/><rect x="1032.0" y="490.3" width="7" height="40.3" rx="1.5" fill="#ecd04a" fill-opacity="0.8" stroke="#ecd04a" stroke-width="2"/><rect x="1041.9" y="473.4" width="7" height="57.2" rx="1.5" fill="#94b7f9" fill-opacity="0.8" stroke="#94b7f9" stroke-width="2"/><rect x="1051.8" y="442.1" width="7" height="88.5" rx="1.5" fill="#ee8033" fill-opacity="0.8" stroke="#ee8033" stroke-width="2"/><rect x="1061.7" y="418.0" width="7" height="112.6" rx="1.5" fill="#e05660" fill-opacity="0.8" stroke="#e05660" stroke-width="2"/><g clip-path="url(#p1clip)"><text x="1045.5" y="581.0" text-anchor="middle" letter-spacing="0.29" font-size="25.3" fill="#ccccdc" stroke="#ccccdc" stroke-width="0.35">13:45:45</text></g><rect x="1092.9" y="505.0" width="7" height="25.6" rx="1.5" fill="#85bd72" fill-opacity="0.8" stroke="#85bd72" stroke-width="2"/><rect x="1102.8" y="490.3" width="7" height="40.3" rx="1.5" fill="#ecd04a" fill-opacity="0.8" stroke="#ecd04a" stroke-width="2"/><rect x="1112.7" y="473.4" width="7" height="57.2" rx="1.5" fill="#94b7f9" fill-opacity="0.8" stroke="#94b7f9" stroke-width="2"/><rect x="1122.6" y="442.1" width="7" height="88.5" rx="1.5" fill="#ee8033" fill-opacity="0.8" stroke="#ee8033" stroke-width="2"/><rect x="1132.5" y="418.0" width="7" height="112.6" rx="1.5" fill="#e05660" fill-opacity="0.8" stroke="#e05660" stroke-width="2"/><g clip-path="url(#p1clip)"><text x="1116.3" y="581.0" text-anchor="middle" letter-spacing="0.29" font-size="25.3" fill="#ccccdc" stroke="#ccccdc" stroke-width="0.35">13:46:00</text></g><rect x="1163.7" y="505.0" width="7" height="25.6" rx="1.5" fill="#85bd72" fill-opacity="0.8" stroke="#85bd72" stroke-width="2"/><rect x="1173.6" y="490.3" width="7" height="40.3" rx="1.5" fill="#ecd04a" fill-opacity="0.8" stroke="#ecd04a" stroke-width="2"/><rect x="1183.5" y="473.4" width="7" height="57.2" rx="1.5" fill="#94b7f9" fill-opacity="0.8" stroke="#94b7f9" stroke-width="2"/><rect x="1193.4" y="442.1" width="7" height="88.5" rx="1.5" fill="#ee8033" fill-opacity="0.8" stroke="#ee8033" stroke-width="2"/><rect x="1203.3" y="418.0" width="7" height="112.6" rx="1.5" fill="#e05660" fill-opacity="0.8" stroke="#e05660" stroke-width="2"/><g clip-path="url(#p1clip)"><text x="1187.1" y="581.0" text-anchor="middle" letter-spacing="0.29" font-size="25.3" fill="#ccccdc" stroke="#ccccdc" stroke-width="0.35">13:46:15</text></g><rect x="1234.5" y="505.0" width="7" height="25.6" rx="1.5" fill="#85bd72" fill-opacity="0.8" stroke="#85bd72" stroke-width="2"/><rect x="1244.4" y="490.3" width="7" height="40.3" rx="1.5" fill="#ecd04a" fill-opacity="0.8" stroke="#ecd04a" stroke-width="2"/><rect x="1254.3" y="473.4" width="7" height="57.2" rx="1.5" fill="#94b7f9" fill-opacity="0.8" stroke="#94b7f9" stroke-width="2"/><rect x="1264.2" y="442.1" width="7" height="88.5" rx="1.5" fill="#ee8033" fill-opacity="0.8" stroke="#ee8033" stroke-width="2"/><rect x="1274.1" y="418.0" width="7" height="112.6" rx="1.5" fill="#e05660" fill-opacity="0.8" stroke="#e05660" stroke-width="2"/><g clip-path="url(#p1clip)"><text x="1257.9" y="581.0" text-anchor="middle" letter-spacing="0.29" font-size="25.3" fill="#ccccdc" stroke="#ccccdc" stroke-width="0.35">13:46:30</text></g><rect x="1305.3" y="505.0" width="7" height="25.6" rx="1.5" fill="#85bd72" fill-opacity="0.8" stroke="#85bd72" stroke-width="2"/><rect x="1315.2" y="490.3" width="7" height="40.3" rx="1.5" fill="#ecd04a" fill-opacity="0.8" stroke="#ecd04a" stroke-width="2"/><rect x="1325.1" y="473.4" width="7" height="57.2" rx="1.5" fill="#94b7f9" fill-opacity="0.8" stroke="#94b7f9" stroke-width="2"/><rect x="1335.0" y="442.1" width="7" height="88.5" rx="1.5" fill="#ee8033" fill-opacity="0.8" stroke="#ee8033" stroke-width="2"/><rect x="1344.9" y="418.0" width="7" height="112.6" rx="1.5" fill="#e05660" fill-opacity="0.8" stroke="#e05660" stroke-width="2"/><g clip-path="url(#p1clip)"><text x="1328.7" y="581.0" text-anchor="middle" letter-spacing="0.29" font-size="25.3" fill="#ccccdc" stroke="#ccccdc" stroke-width="0.35">13:46:45</text></g><rect x="1376.1" y="505.0" width="7" height="25.6" rx="1.5" fill="#85bd72" fill-opacity="0.8" stroke="#85bd72" stroke-width="2"/><rect x="1386.0" y="490.3" width="7" height="40.3" rx="1.5" fill="#ecd04a" fill-opacity="0.8" stroke="#ecd04a" stroke-width="2"/><rect x="1395.9" y="473.4" width="7" height="57.2" rx="1.5" fill="#94b7f9" fill-opacity="0.8" stroke="#94b7f9" stroke-width="2"/><rect x="1405.8" y="442.1" width="7" height="88.5" rx="1.5" fill="#ee8033" fill-opacity="0.8" stroke="#ee8033" stroke-width="2"/><rect x="1415.7" y="418.0" width="7" height="112.6" rx="1.5" fill="#e05660" fill-opacity="0.8" stroke="#e05660" stroke-width="2"/><g clip-path="url(#p1clip)"><text x="1399.5" y="581.0" text-anchor="middle" letter-spacing="0.29" font-size="25.3" fill="#ccccdc" stroke="#ccccdc" stroke-width="0.35">13:47:00</text></g><rect x="1446.9" y="505.0" width="7" height="25.6" rx="1.5" fill="#85bd72" fill-opacity="0.8" stroke="#85bd72" stroke-width="2"/><rect x="1456.8" y="490.3" width="7" height="40.3" rx="1.5" fill="#ecd04a" fill-opacity="0.8" stroke="#ecd04a" stroke-width="2"/><rect x="1466.7" y="473.4" width="7" height="57.2" rx="1.5" fill="#94b7f9" fill-opacity="0.8" stroke="#94b7f9" stroke-width="2"/><rect x="1476.6" y="442.1" width="7" height="88.5" rx="1.5" fill="#ee8033" fill-opacity="0.8" stroke="#ee8033" stroke-width="2"/><rect x="1486.5" y="418.0" width="7" height="112.6" rx="1.5" fill="#e05660" fill-opacity="0.8" stroke="#e05660" stroke-width="2"/><g clip-path="url(#p1clip)"><text x="1470.3" y="581.0" text-anchor="middle" letter-spacing="0.29" font-size="25.3" fill="#ccccdc" stroke="#ccccdc" stroke-width="0.35">13:47:15</text></g><rect x="1517.7" y="505.0" width="7" height="25.6" rx="1.5" fill="#85bd72" fill-opacity="0.8" stroke="#85bd72" stroke-width="2"/><rect x="1527.6" y="490.3" width="7" height="40.3" rx="1.5" fill="#ecd04a" fill-opacity="0.8" stroke="#ecd04a" stroke-width="2"/><rect x="1537.5" y="473.4" width="7" height="57.2" rx="1.5" fill="#94b7f9" fill-opacity="0.8" stroke="#94b7f9" stroke-width="2"/><rect x="1547.4" y="442.1" width="7" height="88.5" rx="1.5" fill="#ee8033" fill-opacity="0.8" stroke="#ee8033" stroke-width="2"/><rect x="1557.3" y="418.0" width="7" height="112.6" rx="1.5" fill="#e05660" fill-opacity="0.8" stroke="#e05660" stroke-width="2"/><g clip-path="url(#p1clip)"><text x="1541.1" y="581.0" text-anchor="middle" letter-spacing="0.29" font-size="25.3" fill="#ccccdc" stroke="#ccccdc" stroke-width="0.35">13:47:30</text></g><rect x="1588.5" y="505.0" width="7" height="25.6" rx="1.5" fill="#85bd72" fill-opacity="0.8" stroke="#85bd72" stroke-width="2"/><rect x="1598.4" y="490.3" width="7" height="40.3" rx="1.5" fill="#ecd04a" fill-opacity="0.8" stroke="#ecd04a" stroke-width="2"/><rect x="1608.3" y="473.4" width="7" height="57.2" rx="1.5" fill="#94b7f9" fill-opacity="0.8" stroke="#94b7f9" stroke-width="2"/><rect x="1618.2" y="418.0" width="7" height="112.6" rx="1.5" fill="#ee8033" fill-opacity="0.8" stroke="#ee8033" stroke-width="2"/><rect x="1628.1" y="314.1" width="7" height="216.5" rx="1.5" fill="#e05660" fill-opacity="0.8" stroke="#e05660" stroke-width="2"/><g clip-path="url(#p1clip)"><text x="1611.9" y="581.0" text-anchor="middle" letter-spacing="0.29" font-size="25.3" fill="#ccccdc" stroke="#ccccdc" stroke-width="0.35">13:47:45</text></g><rect x="1659.3" y="505.0" width="7" height="25.6" rx="1.5" fill="#85bd72" fill-opacity="0.8" stroke="#85bd72" stroke-width="2"/><rect x="1669.2" y="490.3" width="7" height="40.3" rx="1.5" fill="#ecd04a" fill-opacity="0.8" stroke="#ecd04a" stroke-width="2"/><rect x="1679.1" y="473.4" width="7" height="57.2" rx="1.5" fill="#94b7f9" fill-opacity="0.8" stroke="#94b7f9" stroke-width="2"/><rect x="1689.0" y="418.0" width="7" height="112.6" rx="1.5" fill="#ee8033" fill-opacity="0.8" stroke="#ee8033" stroke-width="2"/><rect x="1698.9" y="314.1" width="7" height="216.5" rx="1.5" fill="#e05660" fill-opacity="0.8" stroke="#e05660" stroke-width="2"/><g clip-path="url(#p1clip)"><text x="1682.7" y="581.0" text-anchor="middle" letter-spacing="0.29" font-size="25.3" fill="#ccccdc" stroke="#ccccdc" stroke-width="0.35">13:48:00</text></g><rect x="1730.1" y="505.0" width="7" height="25.6" rx="1.5" fill="#85bd72" fill-opacity="0.8" stroke="#85bd72" stroke-width="2"/><rect x="1740.0" y="490.3" width="7" height="40.3" rx="1.5" fill="#ecd04a" fill-opacity="0.8" stroke="#ecd04a" stroke-width="2"/><rect x="1749.9" y="473.4" width="7" height="57.2" rx="1.5" fill="#94b7f9" fill-opacity="0.8" stroke="#94b7f9" stroke-width="2"/><rect x="1759.8" y="418.0" width="7" height="112.6" rx="1.5" fill="#ee8033" fill-opacity="0.8" stroke="#ee8033" stroke-width="2"/><rect x="1769.7" y="314.1" width="7" height="216.5" rx="1.5" fill="#e05660" fill-opacity="0.8" stroke="#e05660" stroke-width="2"/><g clip-path="url(#p1clip)"><text x="1753.5" y="581.0" text-anchor="middle" letter-spacing="0.29" font-size="25.3" fill="#ccccdc" stroke="#ccccdc" stroke-width="0.35">13:48:15</text></g><circle cx="2177.7" cy="228.2" r="12" fill="none" stroke="#9a9aa4" stroke-width="2.6"/><rect x="2176.4" y="226" width="2.6" height="8.5" fill="#9a9aa4"/><circle cx="2177.7" cy="221.8" r="1.6" fill="#9a9aa4"/><rect x="1960.3" y="321.3" width="1026.3" height="2" fill="rgba(240,250,255,0.075)"/><rect x="1960.3" y="395.3" width="1026.3" height="2" fill="rgba(240,250,255,0.075)"/><rect x="1960.3" y="469.2" width="1026.3" height="2" fill="rgba(240,250,255,0.075)"/><rect x="1960.3" y="543.2" width="1026.3" height="2" fill="rgba(240,250,255,0.075)"/><rect x="1960.3" y="618.3" width="1026.3" height="2" fill="rgba(240,250,255,0.075)"/><rect x="2248.3" y="292.7" width="2" height="393.4" fill="rgba(240,250,255,0.075)"/><rect x="2590.2" y="292.7" width="2" height="393.4" fill="rgba(240,250,255,0.075)"/><rect x="2932.2" y="292.7" width="2" height="393.4" fill="rgba(240,250,255,0.075)"/><text x="1949.2" y="329.3" text-anchor="end" letter-spacing="0.7" font-size="25.3" fill="#ccccdc" stroke="#ccccdc" stroke-width="0.35">0.00035</text><text x="1949.2" y="403.3" text-anchor="end" letter-spacing="0.7" font-size="25.3" fill="#ccccdc" stroke="#ccccdc" stroke-width="0.35">0.0003</text><text x="1949.2" y="477.2" text-anchor="end" letter-spacing="0.7" font-size="25.3" fill="#ccccdc" stroke="#ccccdc" stroke-width="0.35">0.00025</text><text x="1949.2" y="551.2" text-anchor="end" letter-spacing="0.7" font-size="25.3" fill="#ccccdc" stroke="#ccccdc" stroke-width="0.35">0.0002</text><text x="1949.2" y="626.3" text-anchor="end" letter-spacing="0.7" font-size="25.3" fill="#ccccdc" stroke="#ccccdc" stroke-width="0.35">0.00015</text><text x="2249.3" y="715.8" text-anchor="middle" font-size="25.3" fill="#ccccdc" stroke="#ccccdc" stroke-width="0.35">13:50</text><text x="2591.2" y="715.8" text-anchor="middle" font-size="25.3" fill="#ccccdc" stroke="#ccccdc" stroke-width="0.35">13:55</text><text x="2933.2" y="715.8" text-anchor="middle" font-size="25.3" fill="#ccccdc" stroke="#ccccdc" stroke-width="0.35">14:00</text><polyline points="1959.5,636.7 2078.1,636.7 2094.7,569.9 2213.7,569.9 2230.3,494.0 2282.9,494.0 2299.9,432.7 2420.1,432.7 2437.0,382.0 2556.4,382.0 2572.2,385.6 2692.8,385.6 2709.8,344.5 2831.2,344.5 2847.0,343.3 2880.6,343.3 2897.6,334.6 2914.3,334.6 2932.1,339.0 2966.9,339.0 2983.5,351.6" fill="none" stroke="#af7ad3" stroke-width="2.2" stroke-linejoin="round"/><rect x="778.4" y="964.5" width="1000.4" height="2" fill="rgba(240,250,255,0.075)"/><rect x="778.4" y="1045.0" width="1000.4" height="2" fill="rgba(240,250,255,0.075)"/><rect x="778.4" y="1127.0" width="1000.4" height="2" fill="rgba(240,250,255,0.075)"/><rect x="778.4" y="1208.0" width="1000.4" height="2" fill="rgba(240,250,255,0.075)"/><rect x="1030.3" y="900.9" width="2" height="393.7" fill="rgba(240,250,255,0.075)"/><rect x="1363.4" y="900.9" width="2" height="393.7" fill="rgba(240,250,255,0.075)"/><rect x="1696.5" y="900.9" width="2" height="393.7" fill="rgba(240,250,255,0.075)"/><text x="766.8" y="972.5" text-anchor="end" letter-spacing="1.0" font-size="25.3" fill="#ccccdc" stroke="#ccccdc" stroke-width="0.35">26000000</text><text x="766.8" y="1053.0" text-anchor="end" letter-spacing="1.0" font-size="25.3" fill="#ccccdc" stroke="#ccccdc" stroke-width="0.35">24000000</text><text x="766.8" y="1135.0" text-anchor="end" letter-spacing="1.0" font-size="25.3" fill="#ccccdc" stroke="#ccccdc" stroke-width="0.35">22000000</text><text x="766.8" y="1216.0" text-anchor="end" letter-spacing="1.0" font-size="25.3" fill="#ccccdc" stroke="#ccccdc" stroke-width="0.35">20000000</text><text x="1031.3" y="1323.0" text-anchor="middle" letter-spacing="-0.3" font-size="25.3" fill="#ccccdc" stroke="#ccccdc" stroke-width="0.35">13:50</text><text x="1364.4" y="1323.0" text-anchor="middle" letter-spacing="-0.3" font-size="25.3" fill="#ccccdc" stroke="#ccccdc" stroke-width="0.35">13:55</text><text x="1697.5" y="1323.0" text-anchor="middle" letter-spacing="-0.3" font-size="25.3" fill="#ccccdc" stroke="#ccccdc" stroke-width="0.35">14:00</text><polyline points="777.3,1085.7 781.2,1074.8 797.1,1166.6 813.9,1127.7 831.0,1152.6 846.9,1132.7 864.0,1154.9 880.8,985.3 897.1,983.7 913.8,996.2 931.0,1212.9 946.9,1205.9 964.0,1142.5 980.7,1121.8 997.1,1196.9 1014.2,1059.2 1031.3,1030.0 1047.3,1124.6 1064.0,1054.5 1081.1,935.1 1097.5,985.7 1114.2,944.1 1147.2,1054.5 1164.0,1131.2 1180.7,1102.4 1197.1,1023.0 1213.9,1017.6 1231.0,1047.1 1247.0,1212.9 1263.7,1204.7 1280.4,1099.3 1297.1,1084.5 1331.0,985.7 1347.3,1070.1 1364.1,1148.7 1381.2,1163.9 1397.5,1153.7 1413.9,1084.9 1431.0,1251.0 1447.7,1216.0 1464.0,1192.6 1480.8,1074.8 1497.5,1104.3 1514.2,1216.0 1531.0,1195.8 1546.9,1132.3 1564.0,1102.8 1580.7,1132.3 1597.1,1239.3 1614.2,1152.6 1631.3,1184.9 1647.7,1154.9 1664.0,1055.7 1681.1,1061.9 1697.5,1045.6 1714.2,1009.4 1731.3,1041.7 1747.3,991.5 1764.0,1071.3" fill="none" stroke="#85bd72" stroke-width="2.2" stroke-linejoin="round"/><rect x="1979.5" y="938.0" width="1007.2" height="2" fill="rgba(240,250,255,0.075)"/><rect x="1979.5" y="1004.1" width="1007.2" height="2" fill="rgba(240,250,255,0.075)"/><rect x="1979.5" y="1069.1" width="1007.2" height="2" fill="rgba(240,250,255,0.075)"/><rect x="1979.5" y="1134.0" width="1007.2" height="2" fill="rgba(240,250,255,0.075)"/><rect x="1979.5" y="1199.8" width="1007.2" height="2" fill="rgba(240,250,255,0.075)"/><rect x="2081.6" y="900.9" width="2" height="347.0" fill="rgba(240,250,255,0.075)"/><rect x="2416.2" y="900.9" width="2" height="347.0" fill="rgba(240,250,255,0.075)"/><rect x="2751.6" y="900.9" width="2" height="347.0" fill="rgba(240,250,255,0.075)"/><text x="1968.6" y="946.0" text-anchor="end" letter-spacing="0.4" font-size="25.3" fill="#ccccdc" stroke="#ccccdc" stroke-width="0.35">12500000</text><text x="1968.6" y="1012.1" text-anchor="end" letter-spacing="0.4" font-size="25.3" fill="#ccccdc" stroke="#ccccdc" stroke-width="0.35">10000000</text><text x="1968.6" y="1077.1" text-anchor="end" letter-spacing="0.4" font-size="25.3" fill="#ccccdc" stroke="#ccccdc" stroke-width="0.35">7500000</text><text x="1968.6" y="1142.0" text-anchor="end" letter-spacing="0.4" font-size="25.3" fill="#ccccdc" stroke="#ccccdc" stroke-width="0.35">5000000</text><text x="1968.6" y="1207.8" text-anchor="end" letter-spacing="0.4" font-size="25.3" fill="#ccccdc" stroke="#ccccdc" stroke-width="0.35">2500000</text><text x="2082.6" y="1277.0" text-anchor="middle" letter-spacing="-0.3" font-size="25.3" fill="#ccccdc" stroke="#ccccdc" stroke-width="0.35">13:45</text><text x="2417.2" y="1277.0" text-anchor="middle" letter-spacing="-0.3" font-size="25.3" fill="#ccccdc" stroke="#ccccdc" stroke-width="0.35">13:50</text><text x="2752.6" y="1277.0" text-anchor="middle" letter-spacing="-0.3" font-size="25.3" fill="#ccccdc" stroke="#ccccdc" stroke-width="0.35">13:55</text><polyline points="2065.5,1151.0 2082.2,1086.0 2098.9,1086.0 2114.9,1035.9 2132.0,1084.9 2148.7,1077.9 2165.5,1070.9 2182.2,1060.8 2198.9,1054.2 2215.6,1026.5 2232.4,1020.7 2249.1,1015.6 2265.8,1075.2 2282.6,1065.0 2299.3,1059.2 2316.0,1051.8 2332.7,1044.8 2349.9,1039.8 2366.6,1026.1 2383.7,997.0 2400.0,1056.5 2417.2,1004.7 2434.4,972.8 2451.1,947.5 2466.7,1054.1 2484.2,1046.7 2518.0,990.3 2534.0,979.0 2551.1,973.2 2568.2,946.7 2585.3,939.7 2602.0,1044.0 2618.4,1037.4 2652.2,1027.6 2668.9,979.0 2685.3,973.2 2702.0,967.0 2719.1,935.9 2736.2,1046.7 2752.6,1036.6 2770.1,1027.3 2803.1,1019.5 2819.8,1014.8 2836.2,1008.2 2852.9,1002.8 2870.0,1045.2 2886.4,1038.9 2919.8,1029.6 2937.3,1002.0 2954.0,993.4 2970.0,967.0" fill="none" stroke="#ecd04a" stroke-width="2.2" stroke-linejoin="round"/><polyline points="2065.5,1202.4 2082.2,1140.1 2098.9,1141.3 2114.9,1096.2 2132.0,1140.9 2148.7,1138.6 2165.5,1134.7 2182.2,1129.6 2198.9,1123.8 2215.6,1098.5 2232.4,1092.7 2249.1,1088.8 2265.8,1130.0 2282.6,1127.7 2299.3,1123.8 2316.0,1119.5 2332.7,1114.5 2349.9,1109.4 2366.6,1103.6 2383.7,1075.9 2400.0,1109.8 2417.2,1063.1 2451.1,1016.0 2466.7,1110.1 2484.2,1107.8 2518.0,1057.6 2551.1,1049.0 2568.2,1023.0 2585.3,1016.8 2602.0,1106.2 2618.4,1102.7 2652.2,1093.8 2668.9,1047.1 2702.0,1035.0 2719.1,1006.6 2736.2,1108.9 2770.1,1103.5 2819.8,1089.5 2836.2,1081.3 2852.9,1077.8 2870.0,1108.9 2903.1,1101.6 2919.8,1095.3 2937.3,1070.0 2954.0,1063.8 2970.0,1037.8" fill="none" stroke="#85bd72" stroke-width="2.2" stroke-linejoin="round"/><rect x="670.5" y="1534.5" width="1108.0" height="2" fill="rgba(240,250,255,0.075)"/><rect x="670.5" y="1619.2" width="1108.0" height="2" fill="rgba(240,250,255,0.075)"/><rect x="670.5" y="1704.2" width="1108.0" height="2" fill="rgba(240,250,255,0.075)"/><rect x="670.5" y="1788.5" width="1108.0" height="2" fill="rgba(240,250,255,0.075)"/><rect x="670.5" y="1872.8" width="1108.0" height="2" fill="rgba(240,250,255,0.075)"/><text x="667.7" y="1542.5" text-anchor="end" letter-spacing="0.6" font-size="25.3" fill="#ccccdc" stroke="#ccccdc" stroke-width="0.35">20</text><text x="667.7" y="1627.2" text-anchor="end" letter-spacing="0.6" font-size="25.3" fill="#ccccdc" stroke="#ccccdc" stroke-width="0.35">15</text><text x="667.7" y="1712.2" text-anchor="end" letter-spacing="0.6" font-size="25.3" fill="#ccccdc" stroke="#ccccdc" stroke-width="0.35">10</text><text x="667.7" y="1796.5" text-anchor="end" letter-spacing="0.6" font-size="25.3" fill="#ccccdc" stroke="#ccccdc" stroke-width="0.35">5</text><text x="667.7" y="1880.8" text-anchor="end" letter-spacing="0.6" font-size="25.3" fill="#ccccdc" stroke="#ccccdc" stroke-width="0.35">0</text><rect x="687.3" y="1519.1" width="115.5" height="353.7" rx="1.5" fill="#85bd72" fill-opacity="0.8" stroke="#85bd72" stroke-width="2"/><text x="744.8" y="1923.0" text-anchor="middle" letter-spacing="0.29" font-size="25.3" fill="#ccccdc" stroke="#ccccdc" stroke-width="0.35">13:44:45</text><rect x="809.0" y="1519.1" width="115.5" height="353.7" rx="1.5" fill="#85bd72" fill-opacity="0.8" stroke="#85bd72" stroke-width="2"/><text x="866.5" y="1923.0" text-anchor="middle" letter-spacing="0.29" font-size="25.3" fill="#ccccdc" stroke="#ccccdc" stroke-width="0.35">13:45:00</text><rect x="930.8" y="1536.5" width="115.5" height="336.3" rx="1.5" fill="#85bd72" fill-opacity="0.8" stroke="#85bd72" stroke-width="2"/><text x="988.3" y="1923.0" text-anchor="middle" letter-spacing="0.29" font-size="25.3" fill="#ccccdc" stroke="#ccccdc" stroke-width="0.35">13:45:15</text><rect x="1052.5" y="1536.5" width="115.5" height="336.3" rx="1.5" fill="#85bd72" fill-opacity="0.8" stroke="#85bd72" stroke-width="2"/><text x="1110.0" y="1923.0" text-anchor="middle" letter-spacing="0.29" font-size="25.3" fill="#ccccdc" stroke="#ccccdc" stroke-width="0.35">13:45:30</text><rect x="1174.3" y="1536.5" width="115.5" height="336.3" rx="1.5" fill="#85bd72" fill-opacity="0.8" stroke="#85bd72" stroke-width="2"/><text x="1231.8" y="1923.0" text-anchor="middle" letter-spacing="0.29" font-size="25.3" fill="#ccccdc" stroke="#ccccdc" stroke-width="0.35">13:45:45</text><rect x="1296.0" y="1536.5" width="115.5" height="336.3" rx="1.5" fill="#85bd72" fill-opacity="0.8" stroke="#85bd72" stroke-width="2"/><text x="1353.5" y="1923.0" text-anchor="middle" letter-spacing="0.29" font-size="25.3" fill="#ccccdc" stroke="#ccccdc" stroke-width="0.35">13:46:00</text><rect x="1417.8" y="1621.2" width="115.5" height="251.6" rx="1.5" fill="#85bd72" fill-opacity="0.8" stroke="#85bd72" stroke-width="2"/><text x="1475.3" y="1923.0" text-anchor="middle" letter-spacing="0.29" font-size="25.3" fill="#ccccdc" stroke="#ccccdc" stroke-width="0.35">13:46:15</text><rect x="1539.5" y="1621.2" width="115.5" height="251.6" rx="1.5" fill="#85bd72" fill-opacity="0.8" stroke="#85bd72" stroke-width="2"/><text x="1597.0" y="1923.0" text-anchor="middle" letter-spacing="0.29" font-size="25.3" fill="#ccccdc" stroke="#ccccdc" stroke-width="0.35">13:46:30</text><rect x="1661.3" y="1621.2" width="115.5" height="251.6" rx="1.5" fill="#85bd72" fill-opacity="0.8" stroke="#85bd72" stroke-width="2"/><text x="1718.8" y="1923.0" text-anchor="middle" letter-spacing="0.29" font-size="25.3" fill="#ccccdc" stroke="#ccccdc" stroke-width="0.35">13:46:45</text><rect x="1902.7" y="1552.2" width="1083.7" height="2" fill="rgba(240,250,255,0.075)"/><rect x="1902.7" y="1628.4" width="1083.7" height="2" fill="rgba(240,250,255,0.075)"/><rect x="1902.7" y="1704.2" width="1083.7" height="2" fill="rgba(240,250,255,0.075)"/><rect x="1902.7" y="1779.2" width="1083.7" height="2" fill="rgba(240,250,255,0.075)"/><rect x="1902.7" y="1855.4" width="1083.7" height="2" fill="rgba(240,250,255,0.075)"/><rect x="1982.3" y="1508.9" width="2" height="393.1" fill="rgba(240,250,255,0.075)"/><rect x="2343.2" y="1508.9" width="2" height="393.1" fill="rgba(240,250,255,0.075)"/><rect x="2704.4" y="1508.9" width="2" height="393.1" fill="rgba(240,250,255,0.075)"/><text x="1891.4" y="1560.2" text-anchor="end" font-size="25.3" fill="#ccccdc" stroke="#ccccdc" stroke-width="0.35">0.5</text><text x="1891.4" y="1636.4" text-anchor="end" font-size="25.3" fill="#ccccdc" stroke="#ccccdc" stroke-width="0.35">0.4</text><text x="1891.4" y="1712.2" text-anchor="end" font-size="25.3" fill="#ccccdc" stroke="#ccccdc" stroke-width="0.35">0.3</text><text x="1891.4" y="1787.2" text-anchor="end" font-size="25.3" fill="#ccccdc" stroke="#ccccdc" stroke-width="0.35">0.2</text><text x="1891.4" y="1863.4" text-anchor="end" font-size="25.3" fill="#ccccdc" stroke="#ccccdc" stroke-width="0.35">0.1</text><text x="1983.3" y="1931.5" text-anchor="middle" letter-spacing="-0.3" font-size="25.3" fill="#ccccdc" stroke="#ccccdc" stroke-width="0.35">13:45</text><text x="2344.2" y="1931.5" text-anchor="middle" letter-spacing="-0.3" font-size="25.3" fill="#ccccdc" stroke="#ccccdc" stroke-width="0.35">13:50</text><text x="2705.4" y="1931.5" text-anchor="middle" letter-spacing="-0.3" font-size="25.3" fill="#ccccdc" stroke="#ccccdc" stroke-width="0.35">13:55</text><polyline points="1965.2,1856.0 1983.3,1847.6 1997.4,1841.5 2037.7,1827.8 2055.1,1823.0 2072.0,1817.7 2090.1,1813.3 2144.6,1797.6 2162.7,1793.5 2178.8,1787.1 2217.2,1777.4 2235.3,1773.4 2307.9,1753.6 2326.0,1745.6 2344.2,1740.3 2362.3,1734.3 2379.7,1729.4 2398.6,1719.7 2414.7,1715.3 2436.1,1707.6 2468.4,1698.4 2486.5,1694.3 2504.7,1689.5 2524.8,1681.0 2541.0,1675.4 2561.1,1670.1 2599.4,1657.2 2613.5,1653.2 2649.8,1645.1 2670.0,1639.9 2704.3,1626.6 2722.4,1621.3 2774.8,1607.6 2813.1,1595.5 2831.3,1586.3 2847.4,1580.6 2883.7,1570.6 2903.9,1565.3 2924.0,1559.7 2958.3,1552.4 2975.6,1546.0" fill="none" stroke="#85bd72" stroke-width="2.2" stroke-linejoin="round"/></svg>
</body></html>
